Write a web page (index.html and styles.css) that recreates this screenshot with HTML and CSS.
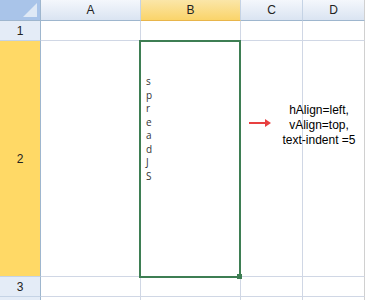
FILE: index.html
```html
<!DOCTYPE html>
<html>
<head>
    <title>spread</title>
    <link rel="stylesheet" href="styles.css">
</head>
<body>
    <div class="sheet">
        <div class="corner"><span class="tri"></span></div>
        <div class="ch">A</div>
        <div class="ch on">B</div>
        <div class="ch">C</div>
        <div class="ch last">D</div>

        <div class="rh">1</div>
        <div class="c"></div>
        <div class="c"></div>
        <div class="c"></div>
        <div class="c last"></div>

        <div class="rh on">2</div>
        <div class="c"></div>
        <div class="c sel">
            <div class="vtext">
                <span>s</span><span>p</span><span>r</span><span>e</span><span>a</span><span>d</span><span>J</span><span>S</span>
            </div>
            <span class="handle"></span>
        </div>
        <div class="c"></div>
        <div class="c last"></div>

        <div class="rh">3</div>
        <div class="c"></div>
        <div class="c"></div>
        <div class="c"></div>
        <div class="c last"></div>

        <div class="rh"></div>
        <div class="c"></div>
        <div class="c"></div>
        <div class="c"></div>
        <div class="c last"></div>

        <div class="note">
            <span class="arrow"></span>
            <p>hAlign=left,<br>vAlign=top,<br>text-indent =5</p>
        </div>
    </div>
</body>
</html>
```

FILE: styles.css
```css
*{padding: 0;margin: 0;box-sizing: border-box;}
body{
    background: #fff;
    font-family: "Liberation Sans", Arial, sans-serif;
}
.sheet{
    position: relative;
    display: grid;
    grid-template-columns: 41px 100px 100px 62px 62px;
    grid-template-rows: 21px 20px 236px 20px 20px;
    width: 365px;
    height: 300px;
    overflow: hidden;
}
.corner{
    position: relative;
    background: #a9c4e9;
    border-right: 1px solid #9eb6ce;
    border-bottom: 1px solid #9eb6ce;
}
.tri{
    position: absolute;
    right: 3px;
    bottom: 3px;
    width: 0;
    height: 0;
    border-left: 14px solid transparent;
    border-bottom: 14px solid #dfe9f6;
}
.ch{
    background: linear-gradient(#f4f7fc, #dae4f2);
    border-right: 1px solid #c5d3e5;
    border-bottom: 1px solid #9eb6ce;
    font-size: 12px;
    color: #222;
    text-align: center;
    line-height: 20px;
}
.ch.on{
    background: linear-gradient(#fbe6a8, #fad46a);
    border-right-color: #c5d3e5;
    border-bottom-color: #e8b54b;
}
.rh{
    background: #e4ecf7;
    border-right: 1px solid #9eb6ce;
    border-bottom: 1px solid #c5d3e5;
    font-size: 12px;
    color: #222;
    display: flex;
    align-items: center;
    justify-content: center;
}
.rh.on{
    background: #ffd966;
    border-bottom-color: #c5d3e5;
}
.c{
    border-right: 1px solid #d0d7e5;
    border-bottom: 1px solid #d0d7e5;
}
.last{
    border-right: 1px solid #d0d0d0;
}
.sel{
    position: relative;
    margin: -1px 0 -1px -2px;
    border: 2px solid #3e7e53;
    z-index: 1;
}
.handle{
    position: absolute;
    right: -3px;
    bottom: -3px;
    width: 5px;
    height: 5px;
    background: #3e7e53;
}
.vtext{
    display: flex;
    flex-direction: column;
    padding: 33px 0 0 5px;
    font-family: "Open Sans", "DejaVu Sans", sans-serif;
    font-size: 10px;
    line-height: 13.5px;
    color: #333;
}
.note{
    position: absolute;
    left: 249px;
    top: 103px;
    display: flex;
    align-items: center;
    z-index: 2;
}
.arrow{
    position: relative;
    width: 20px;
    height: 2px;
    background: #e84040;
    margin-bottom: 6px;
}
.arrow:after{
    content: '';
    position: absolute;
    right: -2px;
    top: -3px;
    border-left: 6px solid #e84040;
    border-top: 4px solid transparent;
    border-bottom: 4px solid transparent;
}
.note p{
    width: 100px;
    font-size: 12px;
    line-height: 15px;
    text-align: center;
    color: #000;
}
```
